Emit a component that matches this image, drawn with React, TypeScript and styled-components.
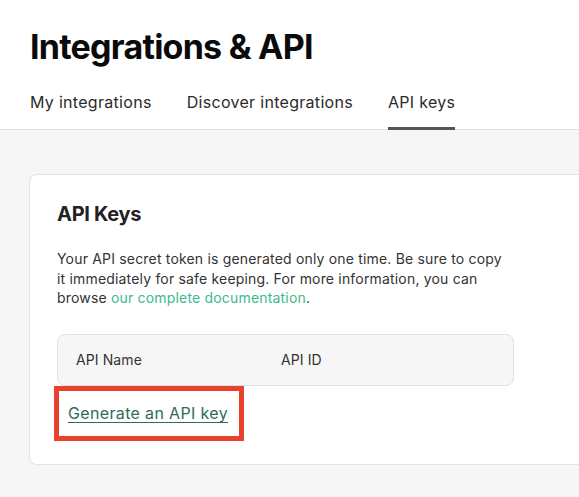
import React from "react";
import styled, { createGlobalStyle } from "styled-components";

const Global = createGlobalStyle`
  html, body { margin: 0; padding: 0; background: #ffffff; }
  body { font-family: Inter, "Noto Sans", sans-serif; color: #333333; -webkit-font-smoothing: antialiased; }
  * { box-sizing: border-box; }
`;

const Page = styled.div`
  width: 579px;
  height: 497px;
  overflow: hidden;
  display: flex;
  flex-direction: column;
  background: #f6f6f6;
`;

const Header = styled.header`
  background: #ffffff;
  border-bottom: 1px solid #e2e2e2;
  padding: 26px 0 0 30px;
  display: flex;
  flex-direction: column;
`;

const Title = styled.h1`
  margin: 0;
  font-size: 34px;
  line-height: 42px;
  font-weight: 700;
  letter-spacing: -0.75px;
  color: #0a0a0a;
`;

const Tabs = styled.nav`
  display: flex;
  gap: 35px;
  margin-top: 24px;
`;

const Tab = styled.a<{ $active?: boolean }>`
  font-size: 16px;
  line-height: 20px;
  letter-spacing: 0.3px;
  color: #2b2b2b;
  padding-bottom: 15px;
  border-bottom: 3px solid ${(p) => (p.$active ? "#555555" : "transparent")};
  margin-bottom: -1px;
  text-decoration: none;
`;

const Body = styled.main`
  padding: 44px 0 0 29px;
`;

const Card = styled.section`
  background: #ffffff;
  border: 1px solid #e3e3e3;
  border-right: none;
  border-radius: 8px 0 0 8px;
  padding: 26px 0 23px 27px;
  width: 600px;
`;

const Heading = styled.h2`
  margin: 0;
  font-size: 20px;
  line-height: 26px;
  font-weight: 700;
  color: #222222;
  letter-spacing: -0.3px;
`;

const Text = styled.p`
  margin: 22px 0 0;
  width: 452px;
  font-size: 14px;
  line-height: 19.5px;
  letter-spacing: 0.18px;
  color: #333333;
`;

const DocLink = styled.a`
  color: #3dba8c;
  text-decoration: none;
`;

const TableHead = styled.div`
  margin-top: 26px;
  width: 457px;
  height: 52px;
  background: #f6f6f6;
  border: 1px solid #e1e1e1;
  border-radius: 8px;
  display: grid;
  grid-template-columns: 205px 1fr;
  align-items: center;
  padding-left: 18px;
  font-size: 14px;
  letter-spacing: 0.1px;
  color: #333333;
`;

const Highlight = styled.div`
  margin-left: -3px;
  width: 190px;
  height: 55px;
  border: 5px solid #e8412c;
  display: flex;
  align-items: center;
  padding-left: 9px;
`;

const GenerateLink = styled.a`
  font-size: 16px;
  letter-spacing: 0.35px;
  color: #2f6c56;
  text-decoration: underline;
  text-underline-offset: 3px;
  text-decoration-thickness: 1px;
`;

export default function App() {
  return (
    <>
      <Global />
      <Page>
        <Header>
          <Title>Integrations &amp; API</Title>
          <Tabs>
            <Tab>My integrations</Tab>
            <Tab>Discover integrations</Tab>
            <Tab $active>API keys</Tab>
          </Tabs>
        </Header>
        <Body>
          <Card>
            <Heading>API Keys</Heading>
            <Text>
              Your API secret token is generated only one time. Be sure to copy it immediately for safe
              keeping. For more information, you can browse <DocLink>our complete documentation</DocLink>.
            </Text>
            <TableHead>
              <span>API Name</span>
              <span>API ID</span>
            </TableHead>
            <Highlight>
              <GenerateLink>Generate an API key</GenerateLink>
            </Highlight>
          </Card>
        </Body>
      </Page>
    </>
  );
}
